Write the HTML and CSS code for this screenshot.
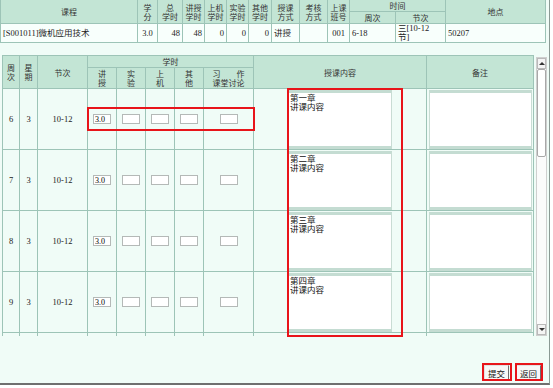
FILE: index.html
```html
<!DOCTYPE html>
<html lang="zh-CN">
<head>
  <meta charset="UTF-8">
  <title>授课计划</title>
  <link rel="stylesheet" href="styles.css">
</head>
<body>
  <div class="frame">
    <table class="course">
      <colgroup>
        <col style="width:137px"><col style="width:20px"><col style="width:25px"><col style="width:22px">
        <col style="width:22px"><col style="width:22px"><col style="width:23px"><col style="width:28px">
        <col style="width:28px"><col style="width:22px"><col style="width:46px"><col style="width:50px">
        <col style="width:100px">
      </colgroup>
      <tr class="head-a">
        <th rowspan="2">课程</th>
        <th rowspan="2"><span class="stack">学&#8203;分</span></th>
        <th rowspan="2"><span class="stack">总&#8203;学时</span></th>
        <th rowspan="2"><span class="stack">讲授&#8203;学时</span></th>
        <th rowspan="2"><span class="stack">上机&#8203;学时</span></th>
        <th rowspan="2"><span class="stack">实验&#8203;学时</span></th>
        <th rowspan="2"><span class="stack">其他&#8203;学时</span></th>
        <th rowspan="2"><span class="stack">授课&#8203;方式</span></th>
        <th rowspan="2"><span class="stack">考核&#8203;方式</span></th>
        <th rowspan="2"><span class="stack">上课&#8203;班号</span></th>
        <th colspan="2">时间</th>
        <th rowspan="2">地点</th>
      </tr>
      <tr class="head-b">
        <th>周次</th>
        <th>节次</th>
      </tr>
      <tr class="data">
        <td class="name">[S001011]微机应用技术</td>
        <td class="mid">3.0</td>
        <td class="num">48</td>
        <td class="num">48</td>
        <td class="num">0</td>
        <td class="num">0</td>
        <td class="num">0</td>
        <td>讲授</td>
        <td></td>
        <td class="mid">001</td>
        <td>6-18</td>
        <td><span class="wrap-time">三[10-12节]</span></td>
        <td>50207</td>
      </tr>
    </table>

    <div class="plan">
      <div class="plan-view">
        <table class="schedule">
          <colgroup>
            <col style="width:17px"><col style="width:18px"><col style="width:50px"><col style="width:29px">
            <col style="width:29px"><col style="width:29px"><col style="width:29px"><col style="width:50px">
            <col style="width:173px"><col style="width:107px">
          </colgroup>
          <tr class="head-a">
            <th rowspan="2"><span class="stack">周&#8203;次</span></th>
            <th rowspan="2"><span class="stack">星&#8203;期</span></th>
            <th rowspan="2">节次</th>
            <th colspan="5">学时</th>
            <th rowspan="2">授课内容</th>
            <th rowspan="2">备注</th>
          </tr>
          <tr class="head-b">
            <th><span class="stack">讲&#8203;授</span></th>
            <th><span class="stack">实&#8203;验</span></th>
            <th><span class="stack">上&#8203;机</span></th>
            <th><span class="stack">其&#8203;他</span></th>
            <th><span class="stack spread">习 作&#8203;课堂讨论</span></th>
          </tr>
          <tr>
            <td>6</td><td>3</td><td>10-12</td>
            <td><input class="hour" value="3.0"></td>
            <td><input class="hour"></td><td><input class="hour"></td>
            <td><input class="hour"></td><td><input class="hour"></td>
            <td><textarea class="content">第一章
讲课内容</textarea></td>
            <td><textarea class="note"></textarea></td>
          </tr>
          <tr>
            <td>7</td><td>3</td><td>10-12</td>
            <td><input class="hour" value="3.0"></td>
            <td><input class="hour"></td><td><input class="hour"></td>
            <td><input class="hour"></td><td><input class="hour"></td>
            <td><textarea class="content">第二章
讲课内容</textarea></td>
            <td><textarea class="note"></textarea></td>
          </tr>
          <tr>
            <td>8</td><td>3</td><td>10-12</td>
            <td><input class="hour" value="3.0"></td>
            <td><input class="hour"></td><td><input class="hour"></td>
            <td><input class="hour"></td><td><input class="hour"></td>
            <td><textarea class="content">第三章
讲课内容</textarea></td>
            <td><textarea class="note"></textarea></td>
          </tr>
          <tr>
            <td>9</td><td>3</td><td>10-12</td>
            <td><input class="hour" value="3.0"></td>
            <td><input class="hour"></td><td><input class="hour"></td>
            <td><input class="hour"></td><td><input class="hour"></td>
            <td><textarea class="content">第四章
讲课内容</textarea></td>
            <td><textarea class="note"></textarea></td>
          </tr>
          <tr class="next-row">
            <td></td><td></td><td></td><td></td><td></td>
            <td></td><td></td><td></td><td></td><td></td>
          </tr>
        </table>
      </div>
      <div class="vscroll">
        <div class="sb-btn"><span class="arrow-up"></span></div>
        <div class="sb-thumb"></div>
        <div class="sb-track"></div>
        <div class="sb-btn"><span class="arrow-down"></span></div>
      </div>
    </div>

    <div class="actions">
      <button class="btn">提交</button>
      <button class="btn">返回</button>
    </div>

    <!-- red annotation boxes -->
    <div class="mark mark-hours"></div>
    <div class="mark mark-content"></div>
    <div class="mark mark-submit"></div>
    <div class="mark mark-back"></div>
  </div>
</body>
</html>
```

FILE: styles.css
```css
body {
  margin: 0;
  background: #fff;
  font-family: "Liberation Serif", "Noto Sans CJK SC", serif;
  font-size: 8.5px;
  color: #222;
}

.frame {
  position: relative;
  width: 549px;
  height: 383px;
  background: #f0fcf7;
  border-right: 1px solid #8a9a94;
  border-bottom: 2px solid #6f6f6f;
  box-shadow: 0 2px 0 #d4d4d4;
  overflow: hidden;
}

table {
  border-collapse: collapse;
  table-layout: fixed;
}

th, td {
  border: 1px solid #9dc4b7;
  padding: 0;
  overflow: hidden;
  white-space: nowrap;
}

th {
  background: #c3e5d5;
  font-weight: normal;
  font-size: 8px;
  color: #333;
  font-family: "Noto Sans CJK SC", sans-serif;
}

/* two-line header labels, broken at the zero-width space */
.stack {
  display: block;
  width: min-content;
  margin: 0 auto;
  white-space: normal;
  word-break: keep-all;
  text-align: center;
}

.stack.spread {
  text-align: justify;
  text-align-last: justify;
}

/* top course summary */
.course {
  width: 545px;
  margin-top: -1px;
  line-height: 9px;
}

.course .head-a th,
.course .head-b th {
  height: 11px;
}

.course .data td {
  height: 18px;
  background: #f8fffc;
  padding: 0 2px;
}

.course .name {
  padding-left: 4px;
}

.course .num {
  text-align: right;
  padding-right: 3px;
}

.course .mid {
  text-align: center;
}

.wrap-time {
  display: block;
  width: 34px;
  white-space: normal;
}

/* weekly plan */
.plan {
  display: flex;
  margin: 12px 0 0 2px;
  height: 281px;
}

.plan-view {
  width: 532px;
  overflow: hidden;
}

.schedule {
  width: 531px;
  line-height: 9px;
}

.schedule .head-a th {
  height: 11px;
}

.schedule .head-b th {
  height: 20px;
}

.schedule td {
  height: 60px;
  text-align: center;
  background: #f0fcf7;
}

.hour {
  width: 18px;
  height: 10px;
  box-sizing: border-box;
  border: 1px solid #b4b9b7;
  background: #fff;
  padding: 0 0 0 1px;
  font: 8px "Liberation Serif", serif;
  display: block;
  margin: 0 auto;
}

.content, .note {
  display: block;
  box-sizing: border-box;
  height: 59px;
  margin: 0 auto;
  padding: 0 1px;
  resize: none;
  overflow: hidden;
  background: #fff;
  border: 1px solid #c9dcd4;
  border-top: 3px solid #c4dcd2;
  border-bottom: 3px solid #c4dcd2;
  font: 8.5px/9.5px "Noto Sans CJK SC", sans-serif;
  color: #111;
  text-align: left;
}

.content {
  width: 104px;
}

.note {
  width: 103px;
}

/* fake vertical scrollbar */
.vscroll {
  width: 11px;
  margin: 2px 0 0 2px;
  display: flex;
  flex-direction: column;
  background: #fbfbfb;
  border: 1px solid #cfcfcf;
  box-sizing: border-box;
}

.sb-btn {
  height: 9px;
  display: flex;
  align-items: center;
  justify-content: center;
  border: 1px solid #b9b9b9;
  background: #f4f4f4;
}

.arrow-up {
  border: 3px solid transparent;
  border-bottom-color: #333;
  border-top-width: 0;
}

.arrow-down {
  border: 3px solid transparent;
  border-top-color: #333;
  border-bottom-width: 0;
}

.sb-thumb {
  height: 86px;
  border: 1px solid #a8a8a8;
  border-radius: 2px;
  background: #fff;
}

.sb-track {
  flex: 1;
}

/* buttons */
.actions {
  display: flex;
  justify-content: flex-end;
  align-items: flex-end;
  gap: 7px;
  height: 44px;
  padding-right: 8px;
}

.btn {
  height: 15px;
  padding: 0 3px;
  font: 8.5px "Noto Sans CJK SC", sans-serif;
  color: #111;
  background: #f7f7f7;
  border: 1px solid;
  border-color: #e2e2e2 #6e6e6e #6e6e6e #e2e2e2;
  line-height: 12px;
}

/* annotations */
.mark {
  position: absolute;
  border: 2px solid #e8141a;
  box-sizing: border-box;
}

.mark-hours {
  left: 87px;
  top: 107px;
  width: 168px;
  height: 24px;
}

.mark-content {
  left: 287px;
  top: 88px;
  width: 116px;
  height: 249px;
}

.mark-submit {
  left: 482px;
  top: 363px;
  width: 30px;
  height: 18px;
}

.mark-back {
  left: 515px;
  top: 363px;
  width: 28px;
  height: 18px;
}
```
